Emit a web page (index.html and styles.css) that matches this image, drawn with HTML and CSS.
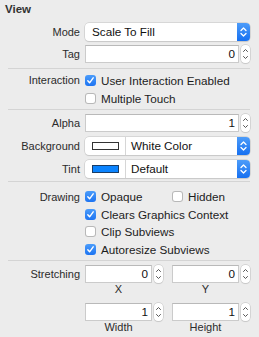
FILE: index.html
```html
<!DOCTYPE html>
<html>
<head>
<meta charset="utf-8">
<link rel="stylesheet" href="styles.css">
</head>
<body>
<div class="panel">
  <div class="title">View</div>

  <div class="section s1">
    <div class="row">
      <div class="label">Mode</div>
      <div class="popup">
        <span class="popup-text">Scale To Fill</span>
        <span class="popup-arrow"><svg width="13" height="18" viewBox="0 0 13 18"><path d="M4 7.5 L6.5 5 L9 7.5 M4 10.5 L6.5 13 L9 10.5" fill="none" stroke="#fff" stroke-width="1.3" stroke-linecap="round" stroke-linejoin="round"/></svg></span>
      </div>
    </div>
    <div class="row">
      <div class="label">Tag</div>
      <div class="numfield">
        <div class="field">0</div>
        <div class="stepper"><svg width="9" height="18" viewBox="0 0 9 18"><path d="M2.5 6.5 L4.5 4.5 L6.5 6.5 M2.5 11.5 L4.5 13.5 L6.5 11.5" fill="none" stroke="#555" stroke-width="1" stroke-linecap="round" stroke-linejoin="round"/></svg></div>
      </div>
    </div>
  </div>

  <div class="sep"></div>

  <div class="section s2">
    <div class="crow">
      <div class="label">Interaction</div>
      <div class="check"><span class="box on"><svg width="11" height="11" viewBox="0 0 11 11"><path d="M2.8 5.8 L4.6 7.8 L8.2 2.8" fill="none" stroke="#fff" stroke-width="1.4" stroke-linecap="round" stroke-linejoin="round"/></svg></span>User Interaction Enabled</div>
    </div>
    <div class="crow">
      <div class="label"></div>
      <div class="check"><span class="box"></span>Multiple Touch</div>
    </div>
  </div>

  <div class="sep"></div>

  <div class="section s3">
    <div class="row">
      <div class="label">Alpha</div>
      <div class="numfield">
        <div class="field">1</div>
        <div class="stepper"><svg width="9" height="18" viewBox="0 0 9 18"><path d="M2.5 6.5 L4.5 4.5 L6.5 6.5 M2.5 11.5 L4.5 13.5 L6.5 11.5" fill="none" stroke="#555" stroke-width="1" stroke-linecap="round" stroke-linejoin="round"/></svg></div>
      </div>
    </div>
    <div class="row">
      <div class="label">Background</div>
      <div class="popup">
        <span class="swatch-cell"><span class="swatch white"></span></span>
        <span class="popup-text">White Color</span>
        <span class="popup-arrow"><svg width="13" height="18" viewBox="0 0 13 18"><path d="M4 7.5 L6.5 5 L9 7.5 M4 10.5 L6.5 13 L9 10.5" fill="none" stroke="#fff" stroke-width="1.3" stroke-linecap="round" stroke-linejoin="round"/></svg></span>
      </div>
    </div>
    <div class="row">
      <div class="label">Tint</div>
      <div class="popup">
        <span class="swatch-cell"><span class="swatch blue"></span></span>
        <span class="popup-text">Default</span>
        <span class="popup-arrow"><svg width="13" height="18" viewBox="0 0 13 18"><path d="M4 7.5 L6.5 5 L9 7.5 M4 10.5 L6.5 13 L9 10.5" fill="none" stroke="#fff" stroke-width="1.3" stroke-linecap="round" stroke-linejoin="round"/></svg></span>
      </div>
    </div>
  </div>

  <div class="sep"></div>

  <div class="section s4">
    <div class="crow">
      <div class="label">Drawing</div>
      <div class="pair">
        <div class="check"><span class="box on"><svg width="11" height="11" viewBox="0 0 11 11"><path d="M2.8 5.8 L4.6 7.8 L8.2 2.8" fill="none" stroke="#fff" stroke-width="1.4" stroke-linecap="round" stroke-linejoin="round"/></svg></span>Opaque</div>
        <div class="check"><span class="box"></span>Hidden</div>
      </div>
    </div>
    <div class="crow">
      <div class="label"></div>
      <div class="check"><span class="box on"><svg width="11" height="11" viewBox="0 0 11 11"><path d="M2.8 5.8 L4.6 7.8 L8.2 2.8" fill="none" stroke="#fff" stroke-width="1.4" stroke-linecap="round" stroke-linejoin="round"/></svg></span>Clears Graphics Context</div>
    </div>
    <div class="crow">
      <div class="label"></div>
      <div class="check"><span class="box"></span>Clip Subviews</div>
    </div>
    <div class="crow">
      <div class="label"></div>
      <div class="check"><span class="box on"><svg width="11" height="11" viewBox="0 0 11 11"><path d="M2.8 5.8 L4.6 7.8 L8.2 2.8" fill="none" stroke="#fff" stroke-width="1.4" stroke-linecap="round" stroke-linejoin="round"/></svg></span>Autoresize Subviews</div>
    </div>
  </div>

  <div class="sep"></div>

  <div class="section s5">
    <div class="srow">
      <div class="label">Stretching</div>
      <div class="cell">
        <div class="numfield small">
          <div class="field">0</div>
          <div class="stepper"><svg width="9" height="18" viewBox="0 0 9 18"><path d="M2.5 6.5 L4.5 4.5 L6.5 6.5 M2.5 11.5 L4.5 13.5 L6.5 11.5" fill="none" stroke="#555" stroke-width="1" stroke-linecap="round" stroke-linejoin="round"/></svg></div>
        </div>
        <div class="sub">X</div>
      </div>
      <div class="cell">
        <div class="numfield small">
          <div class="field">0</div>
          <div class="stepper"><svg width="9" height="18" viewBox="0 0 9 18"><path d="M2.5 6.5 L4.5 4.5 L6.5 6.5 M2.5 11.5 L4.5 13.5 L6.5 11.5" fill="none" stroke="#555" stroke-width="1" stroke-linecap="round" stroke-linejoin="round"/></svg></div>
        </div>
        <div class="sub">Y</div>
      </div>
    </div>
    <div class="srow second">
      <div class="label"></div>
      <div class="cell">
        <div class="numfield small">
          <div class="field">1</div>
          <div class="stepper"><svg width="9" height="18" viewBox="0 0 9 18"><path d="M2.5 6.5 L4.5 4.5 L6.5 6.5 M2.5 11.5 L4.5 13.5 L6.5 11.5" fill="none" stroke="#555" stroke-width="1" stroke-linecap="round" stroke-linejoin="round"/></svg></div>
        </div>
        <div class="sub">Width</div>
      </div>
      <div class="cell">
        <div class="numfield small">
          <div class="field">1</div>
          <div class="stepper"><svg width="9" height="18" viewBox="0 0 9 18"><path d="M2.5 6.5 L4.5 4.5 L6.5 6.5 M2.5 11.5 L4.5 13.5 L6.5 11.5" fill="none" stroke="#555" stroke-width="1" stroke-linecap="round" stroke-linejoin="round"/></svg></div>
        </div>
        <div class="sub">Height</div>
      </div>
    </div>
  </div>
</div>
</body>
</html>
```

FILE: styles.css
```css
* { box-sizing: border-box; }
html, body { margin: 0; padding: 0; }
body {
  background: #ececec;
  font-family: "Liberation Sans", Arial, sans-serif;
  color: #222;
  width: 259px;
  height: 337px;
  overflow: hidden;
}
.panel { padding: 0 9px 0 0; }
.title {
  height: 18px;
  line-height: 18px;
  padding-left: 5px;
  font-size: 11.5px;
  font-weight: bold;
  color: #333;
}
.section { display: flex; flex-direction: column; }
.s1 { padding-top: 5px; gap: 4px; }
.sep {
  height: 1px;
  background: #d4d4d4;
  margin-left: 8px;
}
.s1 + .sep { margin-top: 5px; }
.s2 { padding-top: 2px; }
.s2 + .sep { margin-top: 2px; }
.s3 { padding-top: 4px; gap: 5px; }
.s3 + .sep { margin-top: 3px; }
.s4 { padding-top: 6px; }
.s4 + .sep { margin-top: 2px; }
.s5 { padding-top: 4px; }

.row, .crow, .srow {
  display: grid;
  grid-template-columns: 80px 1fr;
  column-gap: 5px;
  align-items: center;
}
.row { height: 18px; }
.crow { height: 17.5px; }
.s2 .crow { height: 18px; }
.label {
  text-align: right;
  font-size: 11px;
  color: #2b2b2b;
}
.popup {
  height: 18px;
  display: flex;
  align-items: stretch;
  background: #fff;
  border-radius: 4px;
  box-shadow: 0 0 0 0.5px #c2c2c2, 0 1px 1px rgba(0,0,0,0.12);
  font-size: 11.7px;
  color: #111;
}
.popup-text {
  flex: 1;
  padding-left: 7px;
  line-height: 18px;
}
.swatch-cell {
  width: 41px;
  display: flex;
  align-items: center;
  justify-content: center;
  border-right: 1px solid #d6d6d6;
}
.swatch {
  width: 27px;
  height: 8px;
  border: 1px solid #333;
}
.swatch.white { background: #fff; }
.swatch.blue { background: #0b84ff; border-color: #1a3d66; }
.s3 .popup-text { padding-left: 5px; }
.popup-arrow {
  width: 13px;
  border-radius: 0 4px 4px 0;
  background: linear-gradient(#4d9cf9, #1670f1);
  display: flex;
}
.numfield {
  display: flex;
  align-items: center;
  gap: 2px;
  height: 18px;
}
.field {
  flex: 1;
  height: 18px;
  background: #fff;
  border: 1px solid #cbcbcb;
  border-top-color: #b9b9b9;
  text-align: right;
  padding-right: 3px;
  font-size: 11.7px;
  line-height: 16px;
  color: #111;
}
.stepper {
  width: 9px;
  height: 18px;
  background: #fff;
  border-radius: 4px;
  box-shadow: 0 0 0 0.5px #bdbdbd, 0 1px 1px rgba(0,0,0,0.1);
  display: flex;
}
.numfield.small .field { flex: none; width: 67px; }
.check {
  display: flex;
  align-items: center;
  font-size: 11.7px;
  color: #1c1c1c;
}
.box {
  width: 11px;
  height: 11px;
  border-radius: 3px;
  background: #fff;
  box-shadow: inset 0 0 0 1px #b8b8b8;
  margin-right: 5px;
  display: flex;
}
.box.on {
  background: linear-gradient(#4b9cfa, #1d74f2);
  box-shadow: none;
}
.pair {
  display: grid;
  grid-template-columns: 87px 1fr;
}
.srow {
  grid-template-columns: 80px 78px 78px;
  column-gap: 5px;
  align-items: start;
}
.srow .cell:last-child { margin-left: 4px; }
.srow.second { margin-top: 7px; }
.cell { display: flex; flex-direction: column; }
.srow .label { line-height: 18px; }
.sub {
  width: 67px;
  text-align: center;
  font-size: 11px;
  line-height: 13px;
  color: #2b2b2b;
}
```
